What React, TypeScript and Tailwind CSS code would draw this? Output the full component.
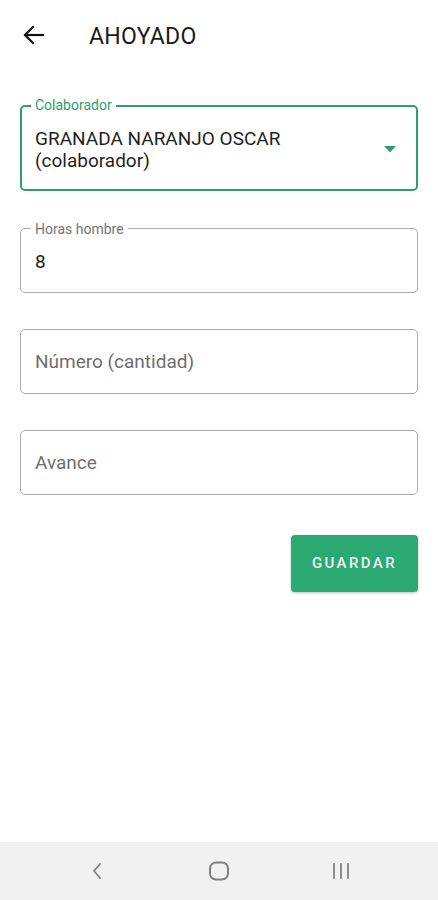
import { useState } from "react";

const green = "#2e9e70";

type FieldProps = {
  label?: string;
  value?: string;
  placeholder?: string;
};

const OutlinedField = ({ label, value, placeholder }: FieldProps) => {
  return (
    <div className="relative h-[65px] rounded-[5px] border border-[#ababab] px-[14px] flex items-center">
      {label && (
        <span className="absolute left-[10px] -top-[8px] bg-white px-[4px] text-[14px] leading-[16px] text-[#757575]">
          {label}
        </span>
      )}
      {value ? (
        <span className="text-[19px] leading-[22px] text-[#212121] pt-[2px]">{value}</span>
      ) : (
        <span className="text-[19px] leading-[22px] text-[#6f6f6f]">{placeholder}</span>
      )}
    </div>
  );
};

const App = () => {
  const [collab] = useState("GRANADA NARANJO OSCAR (colaborador)");

  return (
    <div
      className="w-[438px] h-[900px] bg-white flex flex-col"
      style={{ fontFamily: "Roboto, 'Liberation Sans', sans-serif" }}
    >
      {/* toolbar */}
      <div className="h-[70px] flex items-center shrink-0">
        <button type="button" className="w-[70px] h-[70px] flex items-center justify-center pr-[2px]">
          <svg width="22" height="20" viewBox="0 0 22 20" fill="none" stroke="#111" strokeWidth="2.2" strokeLinecap="square">
            <path d="M2.5 10 H20" />
            <path d="M10 2 L2 10 L10 18" />
          </svg>
        </button>
        <h1 className="ml-[19px] mt-[2px] text-[23px] leading-none text-[#1a1a1a] tracking-[0.3px]">AHOYADO</h1>
      </div>

      <div className="flex-1 px-[20px] pt-[35px] flex flex-col">
        {/* select */}
        <div
          className="relative h-[86px] rounded-[5px] border-2 pl-[13px] pr-[20px] flex items-center"
          style={{ borderColor: green }}
        >
          <span
            className="absolute left-[9px] -top-[10px] bg-white px-[4px] text-[14px] leading-[16px]"
            style={{ color: green }}
          >
            Colaborador
          </span>
          <span className="flex-1 text-[19px] leading-[22px] text-[#1f1f1f] pt-[3px] pr-[60px]">{collab}</span>
          <svg width="12" height="7" viewBox="0 0 12 7" className="mt-[2px]">
            <path d="M0 0 H12 L6 6.5 Z" fill={green} />
          </svg>
        </div>

        <div className="mt-[37px] flex flex-col gap-[36px]">
          <OutlinedField label="Horas hombre" value="8" />
          <OutlinedField placeholder="Número (cantidad)" />
          <OutlinedField placeholder="Avance" />
        </div>

        <div className="mt-[40px] flex justify-end">
          <button
            type="button"
            className="w-[127px] h-[57px] rounded-[4px] bg-[#2aa972] text-[#eef8f2] text-[15px] font-medium tracking-[2.4px] shadow-[0_1px_3px_rgba(0,0,0,0.25)]"
          >
            GUARDAR
          </button>
        </div>
      </div>

      {/* system nav bar */}
      <div className="h-[58px] shrink-0 bg-[#f1f1f1] flex items-center justify-center gap-[100px]">
        <div className="w-[22px] flex justify-center">
          <svg width="12" height="20" viewBox="0 0 12 20" fill="none" stroke="#808080" strokeWidth="1.8" strokeLinecap="round" strokeLinejoin="round">
            <path d="M9 3 L3 10 L9 17" />
          </svg>
        </div>
        <div className="w-[22px] flex justify-center">
          <svg width="22" height="20" viewBox="0 0 22 20" fill="none" stroke="#808080" strokeWidth="2">
            <rect x="2" y="1.5" width="18" height="17" rx="6" />
          </svg>
        </div>
        <div className="w-[22px] flex justify-center">
          <svg width="20" height="18" viewBox="0 0 20 18" fill="none" stroke="#808080" strokeWidth="1.8" strokeLinecap="round">
            <path d="M3 2 V16" />
            <path d="M10 2 V16" />
            <path d="M17 2 V16" />
          </svg>
        </div>
      </div>
    </div>
  );
};

export default App;
